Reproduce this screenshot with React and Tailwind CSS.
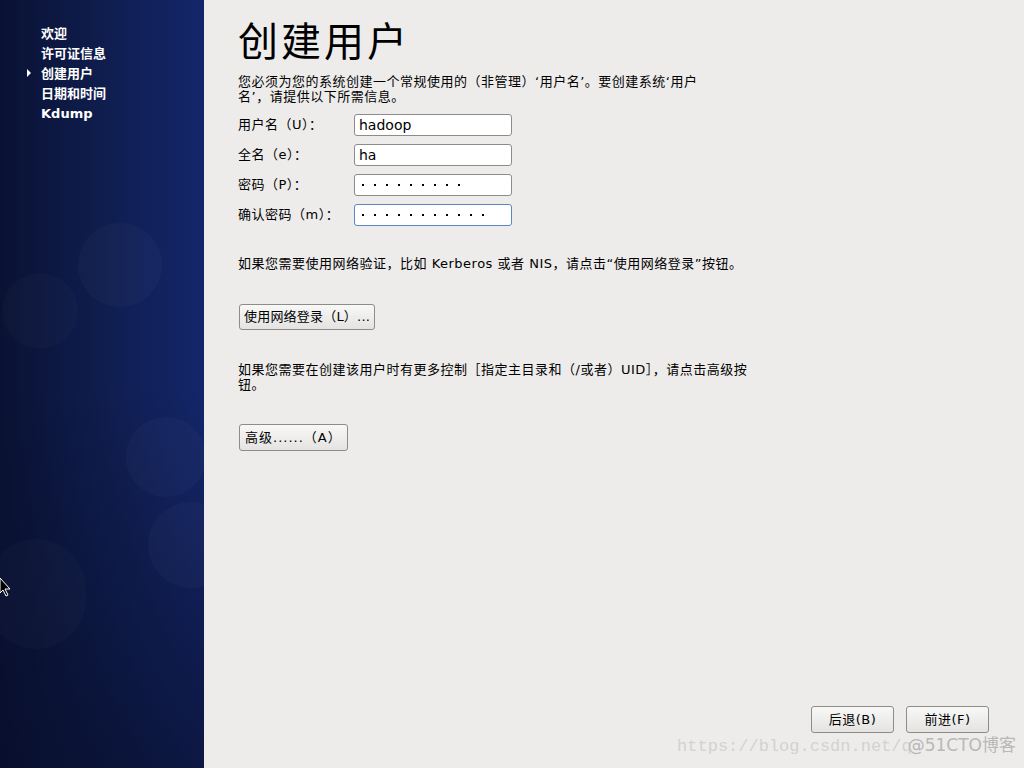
export default function App() {
    const font = { fontFamily: '"DejaVu Sans", "Noto Sans CJK SC", sans-serif' };
    const steps = ['欢迎', '许可证信息', '创建用户', '日期和时间', 'Kdump'];

    const fields = [
        { label: '用户名（U）：', text: 'hadoop' },
        { label: '全名（e）：', text: 'ha' },
        { label: '密码（P）：', dots: 9 },
        { label: '确认密码（m）：', dots: 11, focus: true },
    ];

    const btn = 'rounded-[3px] border border-[#8c8c8a] bg-gradient-to-b from-[#f8f8f7] to-[#e4e3e1] text-[13px]';

    return (
        <div className="flex w-[1024px] h-[768px] overflow-hidden bg-[#edeceb] text-black" style={font}>
            {/* sidebar */}
            <div className="relative w-[204px] shrink-0 bg-gradient-to-r from-[#0a1234] via-[#0f1d4e] to-[#14266a] overflow-hidden">
                <div className="absolute inset-0 bg-gradient-to-b from-transparent via-transparent to-[#070d28]/60" />
                <div className="absolute left-[78px] top-[223px] w-[84px] h-[84px] rounded-full bg-white/[0.022]" />
                <div className="absolute left-[2px] top-[273px] w-[76px] h-[76px] rounded-full bg-white/[0.02]" />
                <div className="absolute left-[126px] top-[417px] w-[80px] h-[80px] rounded-full bg-white/[0.022]" />
                <div className="absolute left-[148px] top-[502px] w-[86px] h-[86px] rounded-full bg-white/[0.022]" />
                <div className="absolute left-[-14px] top-[539px] w-[100px] h-[110px] rounded-full bg-white/[0.02]" />

                <ul className="relative pt-[23px] pl-[41px] flex flex-col">
                    {steps.map((s, i) => (
                        <li key={s} className="relative h-[20px] flex items-center text-[13px] font-bold text-white leading-none">
                            {i === 2 && (
                                <span className="absolute left-[-14px] top-[6px] w-0 h-0 border-y-[4px] border-y-transparent border-l-[4px] border-l-white" />
                            )}
                            {s}
                        </li>
                    ))}
                </ul>

                {/* mouse cursor */}
                <svg className="absolute left-0 top-[578px]" width="12" height="20" viewBox="0 0 12 20">
                    <path d="M0 0 L0 15 L3 12 L6 18 L8 17 L5 11 L10 11 Z" fill="#000" stroke="#fff" strokeWidth="1" />
                </svg>
            </div>

            {/* main */}
            <div className="relative flex-1 flex flex-col pl-[34px] pr-[40px] text-[13px] tracking-[0.5px]">
                <h1 className="mt-[18px] text-[40px] leading-[48px] font-normal tracking-[3px]">创建用户</h1>
                <p className="mt-[8px] leading-[15px]">
                    您必须为您的系统创建一个常规使用的（非管理）‘用户名’。要创建系统‘用户<br />
                    名’，请提供以下所需信息。
                </p>

                <div className="mt-[10px] flex flex-col gap-[8px]">
                    {fields.map(f => (
                        <div key={f.label} className="flex items-center h-[22px]">
                            <span className="w-[116px]">{f.label}</span>
                            <div
                                className={`w-[158px] h-[22px] rounded-[3px] bg-white border flex items-center ${f.focus ? 'border-[#5b86c4]' : 'border-[#8c8c8a]'} ${f.text ? 'px-[4px] text-[14px] tracking-normal' : 'pl-[7px] gap-[10px]'}`}
                            >
                                {f.text || Array.from({ length: f.dots }).map((_, i) => (
                                    <span key={i} className="w-[2px] h-[2px] bg-black" />
                                ))}
                            </div>
                        </div>
                    ))}
                </div>

                <p className="mt-[30px] leading-[15px]">
                    如果您需要使用网络验证，比如 Kerberos 或者 NIS，请点击“使用网络登录”按钮。
                </p>

                <button className={`mt-[33px] self-start ml-[1px] h-[26px] px-[4px] tracking-[0.2px] ${btn}`}>
                    使用网络登录（L）...
                </button>

                <p className="mt-[32px] leading-[15px]">
                    如果您需要在创建该用户时有更多控制［指定主目录和（/或者）UID］，请点击高级按<br />
                    钮。
                </p>

                <button className={`mt-[32px] self-start ml-[1px] h-[27px] px-[5px] tracking-[1px] ${btn}`}>
                    高级......（A）
                </button>

                <div className="mt-auto mb-[35px] flex justify-end gap-[12px] -mr-[5px]">
                    <button className={`w-[83px] h-[27px] tracking-[0.5px] ${btn}`}>后退(B)</button>
                    <button className={`w-[83px] h-[27px] tracking-[0.5px] ${btn}`}>前进(F)</button>
                </div>

                {/* watermark */}
                <div className="absolute right-[8px] bottom-[9px] text-[17px] tracking-normal text-[#d2d2d2] whitespace-nowrap" style={{ fontFamily: '"Liberation Mono", "DejaVu Sans Mono", monospace' }}>
                    https://blog.csdn.net/q<span className="text-[#b8b8b8] -ml-[4px]" style={{ fontFamily: '"DejaVu Sans", "Noto Sans CJK SC", sans-serif' }}>@51CTO博客</span>
                </div>
            </div>
        </div>
    );
}
